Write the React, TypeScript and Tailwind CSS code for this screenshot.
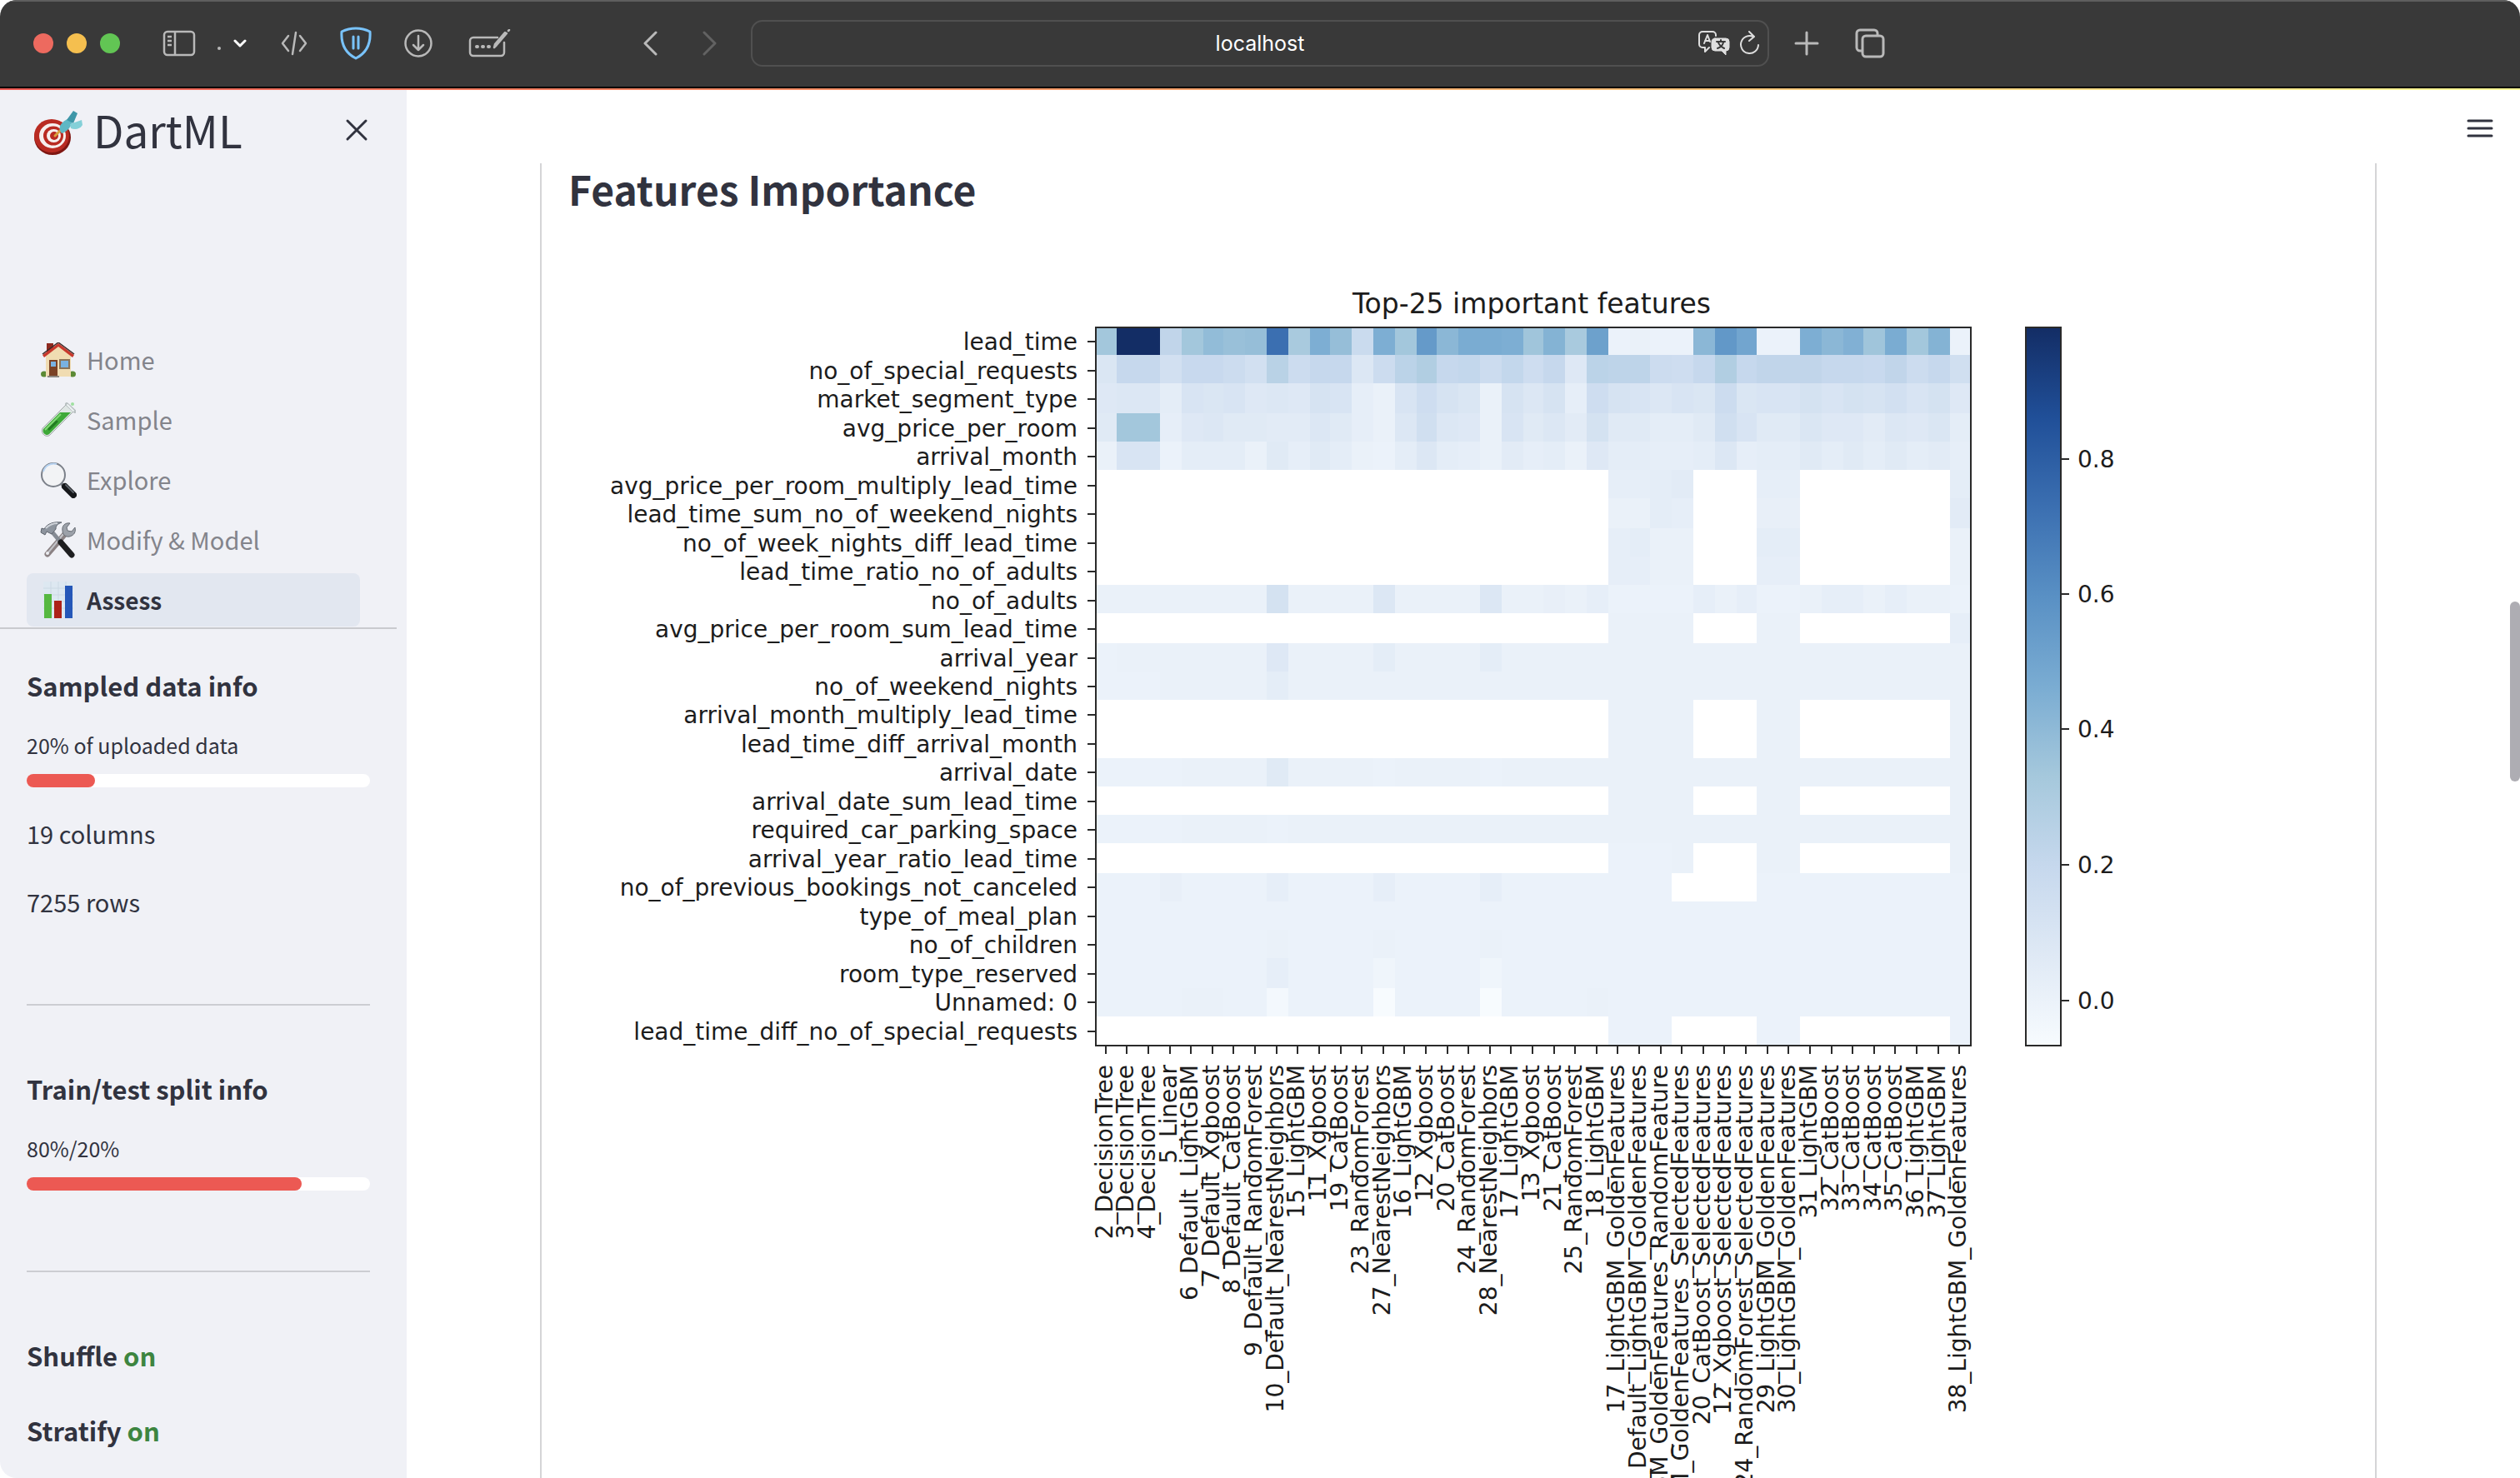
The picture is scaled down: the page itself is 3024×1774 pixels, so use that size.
import React from "react";

/* ---------- heat map data ---------- */

const FEATURES = [
  "lead_time",
  "no_of_special_requests",
  "market_segment_type",
  "avg_price_per_room",
  "arrival_month",
  "avg_price_per_room_multiply_lead_time",
  "lead_time_sum_no_of_weekend_nights",
  "no_of_week_nights_diff_lead_time",
  "lead_time_ratio_no_of_adults",
  "no_of_adults",
  "avg_price_per_room_sum_lead_time",
  "arrival_year",
  "no_of_weekend_nights",
  "arrival_month_multiply_lead_time",
  "lead_time_diff_arrival_month",
  "arrival_date",
  "arrival_date_sum_lead_time",
  "required_car_parking_space",
  "arrival_year_ratio_lead_time",
  "no_of_previous_bookings_not_canceled",
  "type_of_meal_plan",
  "no_of_children",
  "room_type_reserved",
  "Unnamed: 0",
  "lead_time_diff_no_of_special_requests",
];

const MODELS = [
  "2_DecisionTree",
  "3_DecisionTree",
  "4_DecisionTree",
  "5_Linear",
  "6_Default_LightGBM",
  "7_Default_Xgboost",
  "8_Default_CatBoost",
  "9_Default_RandomForest",
  "10_Default_NearestNeighbors",
  "15_LightGBM",
  "11_Xgboost",
  "19_CatBoost",
  "23_RandomForest",
  "27_NearestNeighbors",
  "16_LightGBM",
  "12_Xgboost",
  "20_CatBoost",
  "24_RandomForest",
  "28_NearestNeighbors",
  "17_LightGBM",
  "13_Xgboost",
  "21_CatBoost",
  "25_RandomForest",
  "18_LightGBM",
  "17_LightGBM_GoldenFeatures",
  "6_Default_LightGBM_GoldenFeatures",
  "17_LightGBM_GoldenFeatures_RandomFeature",
  "17_LightGBM_GoldenFeatures_SelectedFeatures",
  "20_CatBoost_SelectedFeatures",
  "12_Xgboost_SelectedFeatures",
  "24_RandomForest_SelectedFeatures",
  "29_LightGBM_GoldenFeatures",
  "30_LightGBM_GoldenFeatures",
  "31_LightGBM",
  "32_CatBoost",
  "33_CatBoost",
  "34_CatBoost",
  "35_CatBoost",
  "36_LightGBM",
  "37_LightGBM",
  "38_LightGBM_GoldenFeatures",
];

type Cell = number | null;

const GOLDEN = [24, 25, 26, 27, 31, 32, 40];

function golden(values: number[], columns: number[] = GOLDEN): Cell[] {
  return MODELS.map((_, i) => {
    const at = columns.indexOf(i);
    return at < 0 ? null : values[at];
  });
}

function flat(base: number, changes: Record<number, Cell> = {}): Cell[] {
  return MODELS.map((_, i) => (i in changes ? changes[i] : base));
}

const GRID: Cell[][] = [
  [38, 100, 100, 27, 38, 43, 41, 42, 75, 36, 49, 42, 23, 49, 38, 58, 45, 50, 50, 49, 39, 47, 36, 55, 6, 7, 6, 6, 45, 59, 53, 6, 6, 49, 45, 48, 39, 50, 38, 47, 6],
  [15, 25, 25, 19, 24, 24, 22, 19, 30, 22, 25, 25, 14, 22, 29, 33, 25, 26, 22, 26, 21, 25, 13, 29, 28, 28, 22, 21, 25, 33, 25, 27, 27, 27, 25, 25, 24, 27, 22, 25, 20],
  [13, 14, 14, 10, 16, 15, 16, 13, 14, 13, 17, 16, 9, 7, 16, 21, 17, 15, 7, 17, 14, 17, 9, 21, 17, 16, 14, 16, 15, 22, 15, 16, 16, 18, 16, 18, 17, 19, 16, 18, 13],
  [12, 38, 38, 9, 13, 14, 12, 12, 11, 11, 14, 12, 9, 7, 14, 20, 14, 13, 7, 16, 12, 14, 11, 18, 12, 12, 10, 10, 12, 20, 16, 12, 12, 15, 13, 13, 11, 14, 13, 15, 10],
  [7, 16, 16, 6, 10, 10, 10, 7, 12, 9, 12, 10, 7, 6, 10, 14, 10, 9, 7, 11, 9, 10, 7, 13, 10, 10, 9, 9, 10, 14, 9, 10, 10, 12, 10, 12, 10, 12, 10, 11, 9],
  golden([9, 9, 10, 11, 9, 9, 10]),
  golden([7, 7, 10, 9, 8, 8, 11]),
  golden([9, 10, 7, 7, 10, 10, 7]),
  golden([9, 9, 7, 7, 9, 9, 7]),
  flat(7, { 8: 18, 13: 14, 18: 14, 21: 8, 23: 9, 24: 6, 25: 6, 26: 6, 27: 6, 28: 9, 30: 9, 31: 6, 32: 6, 34: 9, 35: 9, 37: 9, 40: 6 }),
  golden([7, 7, 7, 7, 7, 7, 9]),
  flat(7, { 0: 6, 8: 13, 13: 10, 18: 10 }),
  flat(7, { 0: 6, 1: 6, 2: 6, 8: 10 }),
  golden([7, 7, 7, 7, 7, 7, 7]),
  golden([7, 7, 7, 7, 7, 7, 7]),
  flat(7, { 0: 6, 1: 6, 2: 6, 3: 6, 8: 12, 13: 6, 18: 6 }),
  golden([7, 7, 7, 7, 7, 7, 7]),
  flat(7, { 0: 6, 1: 6, 2: 6, 3: 6, 8: 6 }),
  golden([6, 6, 6, 7, 7, 7, 7]),
  flat(6, { 3: 8, 8: 9, 13: 9, 18: 9, 27: null, 28: null, 29: null, 30: null }),
  flat(6),
  flat(6, { 8: 7, 13: 7, 18: 7 }),
  flat(6, { 8: 9, 13: 4, 18: 4 }),
  flat(6, { 4: 7, 5: 7, 8: 2, 13: 0, 18: 0, 23: 7 }),
  golden([6, 6, 6, 6, 6, 6], [24, 25, 26, 31, 32, 40]),
];

const STOPS = [
  [247, 251, 254],
  [223, 233, 245],
  [198, 216, 237],
  [165, 200, 220],
  [122, 172, 210],
  [89, 144, 196],
  [59, 111, 177],
  [32, 79, 152],
  [19, 45, 101],
];

function blues(t: number) {
  const p = (t / 100) * (STOPS.length - 1);
  const i = Math.min(Math.floor(p), STOPS.length - 2);
  const f = p - i;
  const [r, g, b] = STOPS[i].map((c, k) => Math.round(c + (STOPS[i + 1][k] - c) * f));
  return `rgb(${r} ${g} ${b})`;
}

/* ---------- chart ---------- */

const LEFT = 633;
const TOP = 72;
const WIDTH = 1050;
const HEIGHT = 862;
const even = (n: number) => Math.round(n / 2) * 2;
const colX = (i: number) => even(LEFT + (i * WIDTH) / MODELS.length);
const rowY = (i: number) => even(TOP + (i * HEIGHT) / FEATURES.length);

function Heatmap() {
  const cw = WIDTH / MODELS.length;
  const rh = HEIGHT / FEATURES.length;
  const bar = [
    ["0.8", 231],
    ["0.6", 393],
    ["0.4", 555],
    ["0.2", 718],
    ["0.0", 881],
  ] as const;
  return (
    <svg
      viewBox="0 0 2136 1700"
      className="block w-full font-['DejaVu_Sans',sans-serif]"
      role="img"
      aria-label="Top-25 important features"
      fill="#1c1c1c"
      fontSize={28}
    >
      <defs>
        <linearGradient id="blues" x1="0" y1="1" x2="0" y2="0">
          {STOPS.map((_, i) => (
            <stop key={i} offset={i / (STOPS.length - 1)} stopColor={blues((i * 100) / (STOPS.length - 1))} />
          ))}
        </linearGradient>
      </defs>
      <text x={LEFT + WIDTH / 2 - 2} y={56} textAnchor="middle" fontSize={33}>
        Top-25 important features
      </text>
      <g shapeRendering="crispEdges">
        {GRID.map((row, r) =>
          row.map((v, c) =>
            v === null ? null : (
              <rect
                key={`${r}-${c}`}
                x={colX(c)}
                y={rowY(r)}
                width={colX(c + 1) - colX(c)}
                height={rowY(r + 1) - rowY(r)}
                fill={blues(v)}
              />
            )
          )
        )}
      </g>
      {FEATURES.map((name, i) => {
        const y = Math.round(TOP + (i + 0.5) * rh);
        return (
          <g key={name}>
            <path d={`M${LEFT - 10} ${y + 1}H${LEFT}`} stroke="#2a2a2a" strokeWidth="2" />
            <text x={LEFT - 22} y={y + 11} textAnchor="end">
              {name}
            </text>
          </g>
        );
      })}
      {MODELS.map((name, i) => {
        const x = Math.round(LEFT + (i + 0.5) * cw) - 1;
        const y = TOP + HEIGHT;
        return (
          <g key={name}>
            <path d={`M${x} ${y}V${y + 11}`} stroke="#2a2a2a" strokeWidth="2" />
            <text transform={`translate(${x + 8} ${y + 24}) rotate(-90)`} textAnchor="end">
              {name}
            </text>
          </g>
        );
      })}
      <rect x={LEFT} y={TOP + 1} width={WIDTH} height={HEIGHT} fill="none" stroke="#2a2a2a" strokeWidth="2" />
      <rect x={1749} y={TOP + 1} width={42} height={HEIGHT} fill="url(#blues)" stroke="#2a2a2a" strokeWidth="2" />
      {bar.map(([label, y]) => (
        <g key={label}>
          <path d={`M1791 ${y}H1801`} stroke="#2a2a2a" strokeWidth="2" />
          <text x={1811} y={y + 10}>
            {label}
          </text>
        </g>
      ))}
    </svg>
  );
}

/* ---------- emoji pictures ---------- */

function Dart() {
  return (
    <svg viewBox="0 0 60 54" className="mt-2 h-[54px] w-[60px]" aria-hidden="true">
      <ellipse cx="23" cy="33" rx="22" ry="21" fill="#7f1712" />
      <ellipse cx="22" cy="31" rx="21" ry="20" fill="#b92b22" />
      <ellipse cx="23" cy="31" rx="16" ry="15" fill="#f6efee" />
      <ellipse cx="24" cy="31" rx="12" ry="11.500" fill="#b92b22" />
      <ellipse cx="24.500" cy="31" rx="8.500" ry="8" fill="#f6efee" />
      <ellipse cx="25" cy="31" rx="5" ry="5" fill="#b92b22" />
      <path d="M26 31l9-9" stroke="#d9a13c" strokeWidth="3" strokeLinecap="round" />
      <path d="M32 19c-1 4 0 7 2 9 4-1 8-4 11-9l2-5-4-4c-5 2-9 5-11 9z" fill="#5fb7c4" />
      <path d="M40 12L48 1l5 3-5 12z" fill="#3f97a8" />
      <path d="M44 17l14-5 1 6c-3 5-9 6-14 4z" fill="#84d0d8" />
    </svg>
  );
}

function House() {
  return (
    <svg viewBox="0 0 42 42" className="h-[42px] w-[42px]" aria-hidden="true">
      <path d="M7 1h8v12H7z" fill="#8e2a20" />
      <ellipse cx="4" cy="38" rx="4" ry="3.500" fill="#5c8a35" />
      <ellipse cx="38" cy="38" rx="4" ry="3.500" fill="#5c8a35" />
      <path d="M6 15L21 3l15 12v26H6z" fill="#f0dcb2" />
      <path d="M21 1L2 15l2 3L21 5l17 13 2-3z" fill="#c8392d" />
      <path d="M21 0L2 14M21 0l19 14" stroke="#3a2a28" strokeWidth="1.500" />
      <path d="M10 21h10v19H10z" fill="#7b4226" />
      <path d="M12 23h6v6h-6z" fill="#79b2e2" />
      <path d="M23 21h11v10H23z" fill="#79b2e2" stroke="#8a7358" strokeWidth="2" />
      <path d="M8 40h14v2H8z" fill="#8d8781" />
    </svg>
  );
}

function TestTube() {
  return (
    <svg viewBox="0 0 42 42" className="h-[42px] w-[42px]" aria-hidden="true">
      <path d="M30 3l9 8L11 39c-4 4-12-1-9-8z" fill="#dfe6e4" stroke="#a3aaa9" />
      <path d="M23 12h13L10 38c-4 3-9-2-7-6z" fill="#3ea938" />
      <path d="M24 14L5 33" stroke="#84d877" strokeWidth="2" />
      <path d="M19 23l-9 9" stroke="#227b22" strokeWidth="3" strokeLinecap="round" />
      <path d="M31 2l10 9" stroke="#b9c0c2" strokeWidth="4" strokeLinecap="round" />
      <path d="M32 3l7 7" stroke="#eef2f3" strokeWidth="2" strokeLinecap="round" />
      <circle cx="38" cy="2" r="2" fill="#9fe0a0" />
    </svg>
  );
}

function Magnifier() {
  return (
    <svg viewBox="0 0 44 44" className="h-[44px] w-[44px]" aria-hidden="true">
      <path d="M25 26l5 4" stroke="#777c83" strokeWidth="4" />
      <path d="M30 30l10 10" stroke="#16181b" strokeWidth="8" strokeLinecap="round" />
      <path d="M31 28l9 9" stroke="#5c6269" strokeWidth="2" strokeLinecap="round" />
      <circle cx="16" cy="16" r="14" fill="#f2f3f5" stroke="#7b8089" strokeWidth="2" />
      <path d="M4 12A13 13 0 0120 3" stroke="#b8d4f2" strokeWidth="2" fill="none" />
    </svg>
  );
}

function Tools() {
  return (
    <svg viewBox="0 0 44 44" className="h-[44px] w-[44px]" aria-hidden="true">
      <path d="M29 16L9 39" stroke="#8b8284" strokeWidth="7" strokeLinecap="round" />
      <path d="M28 15L10 37" stroke="#c2c3c8" strokeWidth="2" />
      <path d="M36 2c-6-1-10 3-9 9 0 6 6 9 11 6 4-2 5-6 4-10l-4 5-5-1-1-4z" fill="#9ca1a9" stroke="#686d75" />
      <circle cx="9" cy="38" r="2" fill="#eceef2" />
      <path d="M15 13l10 12" stroke="#858b94" strokeWidth="5" />
      <path d="M25 25l13 15" stroke="#1e1e20" strokeWidth="7" strokeLinecap="round" />
      <path d="M5 9C9 2 17 0 26 1c-5 2-7 4-7 8l-5 6-6-3-2 4-5-3 1-5z" fill="#8d949e" stroke="#5d636c" />
      <path d="M7 8c4-4 9-6 14-6" stroke="#cfd3d9" strokeWidth="2" fill="none" />
    </svg>
  );
}

function Bars() {
  return (
    <svg viewBox="0 0 38 44" className="h-[44px] w-[38px]" aria-hidden="true">
      <path d="M1 0h36v44H1z" fill="#dde8f1" />
      <path d="M1 8h36M1 16h36M1 24h36M1 32h36M10 0v44M19 0v44M28 0v44" stroke="#ccd9e4" />
      <path d="M2 15h9v29H2z" fill="#56b840" />
      <path d="M14 23h9v21h-9z" fill="#ad2219" />
      <path d="M27 5h9v39h-9z" fill="#2557b8" />
    </svg>
  );
}

/* ---------- browser bar ---------- */

function BrowserBar() {
  return (
    <header className="grid h-[106px] shrink-0 grid-cols-[1fr_1222px_1fr] items-center border-t-2 border-b-2 border-t-[#5e5e5e] border-b-black bg-[#393939] pb-0.5 text-[#b9b9b9]">
      <div className="flex items-center justify-between pr-10 pl-10">
        <div className="flex items-center">
          <div className="flex gap-4">
            <button aria-label="Close window" className="size-6 rounded-full bg-[#ed6a5f]" />
            <button aria-label="Minimise window" className="size-6 rounded-full bg-[#f5bf4f]" />
            <button aria-label="Zoom window" className="size-6 rounded-full bg-[#62c554]" />
          </div>
          <button aria-label="Show sidebar" className="ml-[51px]">
            <svg viewBox="0 0 40 32" className="h-8 w-10" fill="none" stroke="currentColor" strokeWidth="2.500">
              <rect x="2" y="2" width="36" height="28" rx="4" />
              <path d="M15 2v28M6 8h5M6 13h5M6 18h5" />
            </svg>
          </button>
          <button aria-label="Tab groups" className="ml-[25px] text-white">
            <svg viewBox="0 0 36 24" className="h-6 w-9" fill="none" stroke="currentColor" strokeWidth="3" strokeLinecap="round" strokeLinejoin="round">
              <circle cx="3" cy="18" r="2" fill="#b9b9b9" stroke="none" />
              <path d="M22 9l6 6 6-6" />
            </svg>
          </button>
          <button aria-label="Web inspector" className="ml-10">
            <svg viewBox="0 0 34 32" className="h-8 w-[34px]" fill="none" stroke="currentColor" strokeWidth="2.500" strokeLinecap="round" strokeLinejoin="round">
              <path d="M10 7l-7 9 7 9M24 7l7 9-7 9M19 3l-4 26" />
            </svg>
          </button>
          <button aria-label="Content blocker" className="ml-[37px] text-[#79c3fb]">
            <svg viewBox="0 0 40 40" className="size-10" fill="none" stroke="currentColor" strokeWidth="3" strokeLinejoin="round">
              <path d="M20 2c6 0 11 1 17 4 1 15-5 26-17 32C8 32 2 21 3 6c6-3 11-4 17-4z" />
              <path d="M17 12v14M23 12v14" strokeLinecap="round" />
            </svg>
          </button>
          <button aria-label="Downloads" className="ml-[37px]">
            <svg viewBox="0 0 36 36" className="size-9" fill="none" stroke="currentColor" strokeWidth="2.500" strokeLinecap="round" strokeLinejoin="round">
              <circle cx="18" cy="18" r="15.500" />
              <path d="M18 9v17M12 20l6 6 6-6" />
            </svg>
          </button>
          <button aria-label="Compose" className="ml-[42px]">
            <svg viewBox="0 0 52 34" className="h-[34px] w-[52px]" fill="none" stroke="currentColor" strokeWidth="2.500" strokeLinecap="round" strokeLinejoin="round">
              <path d="M35 10H6a4 4 0 00-4 4v14a4 4 0 004 4h33a4 4 0 004-4V16" />
              <path d="M46 5L34 19l-3 3 1-4L44 4zM48 2l1-1" />
              <path d="M10 21h1M17 21h1M24 21h1" strokeWidth="4" />
            </svg>
          </button>
        </div>
        <div className="flex items-center gap-[54px]">
          <button aria-label="Back">
            <svg viewBox="0 0 18 30" className="h-[30px] w-[18px]" fill="none" stroke="currentColor" strokeWidth="3" strokeLinecap="round" strokeLinejoin="round">
              <path d="M16 2L3 15l13 13" />
            </svg>
          </button>
          <button aria-label="Forward" className="text-[#626262]">
            <svg viewBox="0 0 18 30" className="h-[30px] w-[18px]" fill="none" stroke="currentColor" strokeWidth="3" strokeLinecap="round" strokeLinejoin="round">
              <path d="M2 2l13 13L2 28" />
            </svg>
          </button>
        </div>
      </div>
      <div className="grid h-14 grid-cols-[1fr_2fr_1fr] items-center rounded-[14px] border-2 border-[#505050] px-2">
        <span />
        <input
          aria-label="Address"
          readOnly
          value="localhost"
          className="w-full bg-transparent text-center font-['Inter',sans-serif] text-[25px] leading-8 text-white outline-none"
        />
        <div className="flex items-center justify-end gap-2.5 text-[#dedede]">
          <button aria-label="Translate">
            <svg viewBox="0 0 40 30" className="h-[30px] w-10" fill="none" stroke="currentColor" strokeWidth="2" strokeLinejoin="round" strokeLinecap="round">
              <path d="M14 20l-5 5v-5H6a4 4 0 01-4-4V5a4 4 0 014-4h12a4 4 0 014 4v1" />
              <path d="M8 15l4-10 3 8M9 12h5" />
              <path d="M21 9h13a4 4 0 014 4v7a4 4 0 01-4 4v5l-5-5h-8a4 4 0 01-4-4v-7a4 4 0 014-4z" fill="currentColor" strokeWidth="1" />
              <path d="M23 13h10M28 11v2M25 14c1 3 3 5 7 7M31 14c-1 4-4 6-7 7" stroke="#393939" />
            </svg>
          </button>
          <button aria-label="Reload">
            <svg viewBox="0 0 26 30" className="h-[30px] w-[26px]" fill="none" stroke="currentColor" strokeWidth="2" strokeLinecap="round" strokeLinejoin="round">
              <path d="M17 7A10.500 10.500 0 1023 17M12 1l6 6-6 5" />
            </svg>
          </button>
        </div>
      </div>
      <div className="flex items-center gap-[42px] pl-[30px]">
        <button aria-label="New tab">
          <svg viewBox="0 0 30 30" className="size-[30px]" fill="none" stroke="currentColor" strokeWidth="3" strokeLinecap="round">
            <path d="M15 2v26M2 15h26" />
          </svg>
        </button>
        <button aria-label="Tab overview">
          <svg viewBox="0 0 38 38" className="size-[38px]" fill="none" stroke="currentColor" strokeWidth="3" strokeLinejoin="round">
            <path d="M9 28H7a4 4 0 01-4-4V7a4 4 0 014-4h17a4 4 0 014 4v2" />
            <rect x="10" y="10" width="25" height="25" rx="4" />
          </svg>
        </button>
      </div>
    </header>
  );
}

/* ---------- sidebar ---------- */

const NAV = [
  { name: "Home", icon: <House /> },
  { name: "Sample", icon: <TestTube /> },
  { name: "Explore", icon: <Magnifier /> },
  { name: "Modify & Model", icon: <Tools /> },
  { name: "Assess", icon: <Bars />, active: true },
];

function Progress({ label, percent }: { label: string; percent: number }) {
  return (
    <div className="flex flex-col gap-[15px]">
      <p className="text-[25px] leading-10">{label}</p>
      <div role="progressbar" aria-label={label} aria-valuenow={percent} className="h-4 rounded-lg bg-white">
        <div className="h-4 rounded-lg bg-[#ec5953]" style={{ width: `${percent}%` }} />
      </div>
    </div>
  );
}

function Sidebar() {
  return (
    <aside className="w-[488px] shrink-0 bg-[#f0f1f6]">
      <div className="flex h-[94px] items-center pr-[46px] pl-10">
        <Dart />
        <h1 className="ml-3 flex-1 text-[53px] leading-[72px]">DartML</h1>
        <button aria-label="Close sidebar" className="mt-0.5">
          <svg viewBox="0 0 28 28" className="size-7" fill="none" stroke="currentColor" strokeWidth="3" strokeLinecap="round">
            <path d="M3 3l22 22M25 3L3 25" />
          </svg>
        </button>
      </div>
      <nav className="mt-[198px] mr-14 ml-8 flex flex-col gap-2">
        {NAV.map((item) => (
          <a
            key={item.name}
            href="#"
            className={
              item.active
                ? "flex h-16 items-center gap-3 rounded-lg bg-[#e2e7f0] pl-4 text-[28px] font-bold"
                : "flex h-16 items-center gap-3 rounded-lg pl-4 text-[29px] text-[#83848b]"
            }
          >
            <span className="flex w-11 justify-center">{item.icon}</span>
            {item.name}
          </a>
        ))}
      </nav>
      <hr className="mt-px mr-3 border-t-2 border-[#c9cace]" />
      <div className="mt-11 mr-11 ml-8">
        <h2 className="mb-[27px] text-[31px] leading-[48px] font-bold">Sampled data info</h2>
        <Progress label="20% of uploaded data" percent={20} />
        <p className="mt-[31px] text-[29px] leading-[48px]">19 columns</p>
        <p className="mt-[34px] text-[29px] leading-[48px]">7255 rows</p>
        <hr className="mt-[99px] mb-[76px] border-t-2 border-[#cccdd2]" />
        <h2 className="mb-[27px] text-[31px] leading-[48px] font-bold">Train/test split info</h2>
        <Progress label="80%/20%" percent={80} />
        <hr className="mt-24 mb-[76px] border-t-2 border-[#cccdd2]" />
        <h2 className="mb-[42px] text-[31px] leading-[48px] font-bold">
          Shuffle <span className="text-[#3d8540]">on</span>
        </h2>
        <h2 className="text-[31px] leading-[48px] font-bold">
          Stratify <span className="text-[#3d8540]">on</span>
        </h2>
      </div>
    </aside>
  );
}

export default function App() {
  return (
    <div className="relative flex h-screen flex-col overflow-hidden rounded-[20px] bg-white font-['Noto_Sans_CJK_SC','Noto_Sans',sans-serif] text-[#31333f]">
      <BrowserBar />
      <div className="h-0.5 shrink-0 bg-linear-to-r from-[#ec5953] via-[#f9a66c] to-[#fcfa95]" />
      <div className="flex min-h-0 flex-1">
        <Sidebar />
        <main className="min-w-0 flex-1">
          <div className="flex h-[88px] items-center justify-end pr-8">
            <button aria-label="Menu" className="mt-1">
              <svg viewBox="0 0 32 24" className="h-6 w-8" fill="none" stroke="currentColor" strokeWidth="3" strokeLinecap="round">
                <path d="M2 3h28M2 12h28M2 21h28" />
              </svg>
            </button>
          </div>
          <section className="mr-[172px] ml-40 border-x-2 border-[#d5d5d7] px-8">
            <h2 className="mb-16 text-[48px] leading-[60px] font-bold">Features Importance</h2>
            <Heatmap />
          </section>
        </main>
      </div>
      <div className="absolute top-[722px] right-0 h-[216px] w-3 rounded-full bg-[#aeadb3]" />
    </div>
  );
}
